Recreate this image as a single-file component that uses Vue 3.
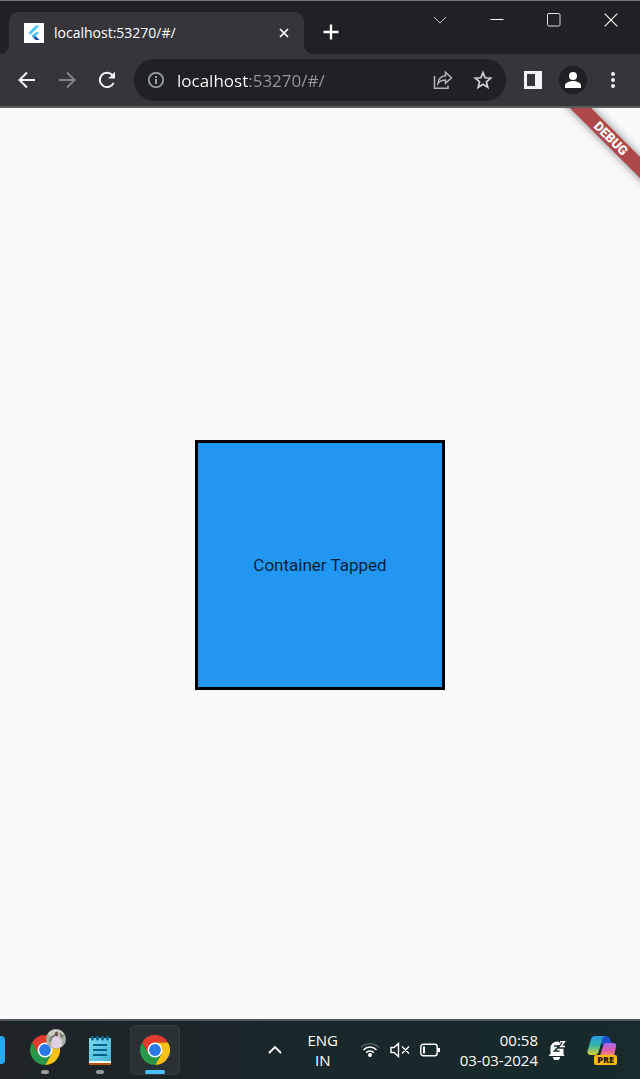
<script setup>
import { ref } from 'vue'

const address = ref('localhost:53270/#/')
const wedges = [
  { d: 'M16 8.5 H29 A15 15 0 0 0 3.01 8.5 L9.5 19.7 Z', fill: '#e33b2e' },
  { d: 'M29 8.5 H16 L22.5 19.7 L16 31 A15 15 0 0 0 29 8.5 Z', fill: '#fbc116' },
  { d: 'M3.01 8.5 L9.5 19.7 H22.5 L16 31 A15 15 0 0 1 3.01 8.5 Z', fill: '#279847' }
]
const apps = [
  { name: 'Chrome with profile', kind: 'chrome', profile: true, active: false },
  { name: 'Notepad', kind: 'notepad', profile: false, active: false },
  { name: 'Chrome', kind: 'chrome', profile: false, active: true }
]
</script>

<template>
  <div class="desktop">
    <header class="titlebar">
      <div class="tab">
        <button class="tab-title">
          <svg width="20" height="20" viewBox="0 0 20 20">
            <path fill="#fff" d="M0 0h20v20H0z" />
            <path fill="#47c5fb" d="M11.8 2.5h3.7L6.3 11.7 4.4 9.9z" />
            <path fill="#47c5fb" d="M11.8 9.2h3.7l-4 4-1.9-1.8z" />
            <path fill="#29a5f0" d="M7.8 13.2l1.9-1.9 2 1.9-2 2z" />
            <path fill="#12409b" d="M9.7 15.2l2-2 3.8 3.8h-3.7z" />
          </svg>
          <span>localhost:53270/#/</span>
        </button>
        <button class="tab-close" aria-label="Close tab">
          <svg width="10" height="10" viewBox="0 0 10 10"><path d="M1 1l8 8M9 1l-8 8" stroke="#fff" stroke-width="1.700" /></svg>
        </button>
      </div>
      <button class="new-tab" aria-label="New tab">
        <svg width="16" height="16" viewBox="0 0 16 16"><path d="M8 .5v15M.5 8h15" stroke="#fff" stroke-width="2.300" /></svg>
      </button>
      <div class="window-buttons">
        <button aria-label="Search tabs">
          <svg width="14" height="14" viewBox="0 0 14 14"><path d="M1 4l6 6 6-6" fill="none" stroke="#c8c8c9" /></svg>
        </button>
        <button aria-label="Minimize">
          <svg width="14" height="14" viewBox="0 0 14 14"><path d="M.5 6.500h13" stroke="#fff" /></svg>
        </button>
        <button aria-label="Maximize">
          <svg width="14" height="14" viewBox="0 0 14 14"><rect x=".5" y=".5" width="12.500" height="12.500" rx="1.500" fill="none" stroke="#e2e2e2" /></svg>
        </button>
        <button aria-label="Close">
          <svg width="14" height="14" viewBox="0 0 14 14"><path d="M.7.7l12.600 12.600M13.300.7L.7 13.300" stroke="#fff" stroke-width="1.100" /></svg>
        </button>
      </div>
    </header>

    <nav class="toolbar">
      <button class="tool" aria-label="Back">
        <svg width="20" height="20" viewBox="0 0 20 20" fill="none" stroke="#f1f3f4" stroke-width="2"><path d="M18 10H3M10 2.500L2.500 10l7.500 7.500" /></svg>
      </button>
      <button class="tool" aria-label="Forward">
        <svg width="20" height="20" viewBox="0 0 20 20" fill="none" stroke="#838488" stroke-width="2"><path d="M2 10h15M10 2.500L17.500 10 10 17.500" /></svg>
      </button>
      <button class="tool" aria-label="Reload">
        <svg width="20" height="20" viewBox="0 0 20 20"><path d="M16.600 12.800A7.200 7.200 0 1 1 15.300 5" fill="none" stroke="#f1f3f4" stroke-width="2" /><path d="M18 1.800v6.800h-6.800z" fill="#f1f3f4" /></svg>
      </button>
      <div class="omnibox">
        <button aria-label="Site information">
          <svg width="18" height="18" viewBox="0 0 18 18"><circle cx="9" cy="9" r="7.200" fill="none" stroke="#9aa0a6" stroke-width="1.800" /><path d="M8 8h2v5H8zM8 5h2v2H8z" fill="#9aa0a6" /></svg>
        </button>
        <input v-model="address" class="address" type="text" aria-label="Address" />
        <button aria-label="Share">
          <svg width="20" height="20" viewBox="0 0 20 20" fill="none" stroke="#b5b6b8" stroke-width="1.500"><path d="M1.500 6v12.200h13.500V15.500" /><path d="M5 13.500C5.500 8.500 8.500 6 12.500 5.700V2.200L18.500 7.800l-6 5.500V9.900C9.500 9.900 7 10.800 5 13.500z" /></svg>
        </button>
        <button aria-label="Bookmark this page">
          <svg width="20" height="20" viewBox="0 0 20 20"><path d="M10 2.600l2.100 5.200 5.600.4-4.300 3.600 1.400 5.500-4.800-3-4.800 3 1.400-5.500-4.300-3.600 5.600-.4z" fill="none" stroke="#d0d1d3" stroke-width="1.700" /></svg>
        </button>
      </div>
      <button class="tool" aria-label="Side panel">
        <svg width="18" height="18" viewBox="0 0 18 18"><path fill="#f1f3f4" fill-rule="evenodd" d="M0 0h18v18H0zM3 3h8v12H3z" /></svg>
      </button>
      <button class="tool" aria-label="Profile">
        <svg width="28" height="28" viewBox="0 0 28 28"><circle cx="14" cy="14" r="14" fill="#202124" /><circle cx="14" cy="10" r="4" fill="#fff" /><path d="M6 22v-2.500c0-2.800 5-4.500 8-4.500s8 1.700 8 4.500V22z" fill="#fff" /></svg>
      </button>
      <button class="tool" aria-label="Menu">
        <svg width="20" height="20" viewBox="0 0 20 20" fill="#f1f3f4"><circle cx="10" cy="4" r="2" /><circle cx="10" cy="10" r="2" /><circle cx="10" cy="16" r="2" /></svg>
      </button>
    </nav>

    <main class="page">
      <div class="banner">DEBUG</div>
      <button class="container-box">Container Tapped</button>
    </main>

    <footer class="taskbar">
      <div class="edge-app"></div>
      <div class="apps">
        <button v-for="app in apps" :key="app.name" class="app" :class="{ active: app.active }" :aria-label="app.name">
          <svg v-if="app.kind === 'chrome'" width="30" height="30" viewBox="1 1 30 30">
            <path v-for="w in wedges" :key="w.d" :d="w.d" :fill="w.fill" />
            <circle cx="16" cy="16" r="7.500" fill="#fff" />
            <circle cx="16" cy="16" r="5.900" fill="#2a78e8" />
          </svg>
          <svg v-else width="24" height="30" viewBox="0 0 24 30">
            <defs>
              <linearGradient id="paper" x1="0" y1="0" x2="1" y2="1"><stop offset="0" stop-color="#7bdcf0" /><stop offset="1" stop-color="#43b4d6" /></linearGradient>
            </defs>
            <path fill="#b5580e" d="M1 24h22v6H1z" />
            <path fill="#fff" d="M1 24h22v4H1z" />
            <path fill="url(#paper)" d="M1 3h22v23H1z" />
            <path d="M4.500 2v2M9.500 2v2M14.500 2v2M19.500 2v2" stroke="#0d6488" stroke-width="3" stroke-linecap="round" />
            <path d="M5 10h14M5 15h14M5 20h14" stroke="#07608a" stroke-width="2" />
          </svg>
          <svg v-if="app.profile" class="badge" width="20" height="20" viewBox="0 0 20 20">
            <circle cx="10" cy="10" r="10" fill="#a7afa0" />
            <path d="M2 4.500A10 10 0 0 1 18 4.500L13 8H5z" fill="#c9ccc5" />
            <path d="M4 8l5-3v5l-6 3zM13 3l5 4-3 2z" fill="#75806e" />
            <path d="M5 17.500l1-8 2.500-2h4l3 3 .5 6.500a10 10 0 0 1-11 .5z" fill="#dfd0e3" />
            <ellipse cx="10.500" cy="4.900" rx="1.700" ry="2.500" fill="#6d5450" />
          </svg>
          <span class="indicator"></span>
        </button>
      </div>

      <div class="tray">
        <button class="hidden-icons" aria-label="Show hidden icons">
          <svg width="14" height="10" viewBox="0 0 14 10"><path d="M1 8l6-6 6 6" fill="none" stroke="#fff" stroke-width="1.900" /></svg>
        </button>
        <button class="language">ENG<br />IN</button>
        <button class="status" aria-label="Network, volume and battery">
          <svg width="20" height="16" viewBox="0 0 20 16" fill="none" stroke-width="1.500"><path d="M1 5.500a12.500 12.500 0 0 1 18 0" stroke="#4d5b5e" /><path d="M3.500 7.900a9 9 0 0 1 13 0M6.200 10.600a5.400 5.400 0 0 1 7.600 0" stroke="#fff" /><circle cx="10" cy="13" r="2" fill="#fff" /></svg>
          <svg width="20" height="16" viewBox="0 0 20 16" fill="none" stroke="#fff" stroke-width="1.400"><path d="M1 5.500h3L8.500 1.500v13L4 10.500H1zM12 4.500l7 7M19 4.500l-7 7" /></svg>
          <svg width="20" height="14" viewBox="0 0 20 14"><rect x=".8" y="1.200" width="16.400" height="11.600" rx="2.500" fill="none" stroke="#fff" stroke-width="1.400" /><path d="M3 3.500h2v7H3zM17.500 5H20v4h-2.500z" fill="#fff" /></svg>
        </button>
        <button class="clock">00:58<br />03-03-2024</button>
        <button class="bell" aria-label="Notifications">
          <svg width="18" height="20" viewBox="0 0 18 20">
            <path d="M2.500 14V8a6.500 6.500 0 0 1 13 0v6l1 2H.500z" fill="#fff" />
            <path d="M5 17h7a3.500 3.500 0 0 1-7 0z" fill="#fff" />
            <path d="M11.500 1.500h5L12.500 7h4.500" fill="none" stroke="#18282c" stroke-width="3.500" />
            <path d="M6 6h5L6.500 11h5" fill="none" stroke="#18282c" stroke-width="1.500" />
            <path d="M12 1.800h4.500L12.800 6.500H17" fill="none" stroke="#fff" stroke-width="1.400" />
          </svg>
        </button>
        <button class="copilot" aria-label="Copilot preview">
          <svg width="30" height="28" viewBox="0 0 30 28">
            <defs>
              <linearGradient id="cool" x1="0" y1="0" x2="0" y2="1"><stop offset="0" stop-color="#269be8" /><stop offset=".5" stop-color="#36b5a4" /><stop offset="1" stop-color="#e1d334" /></linearGradient>
              <linearGradient id="warm" x1="0" y1="0" x2="0" y2="1"><stop offset="0" stop-color="#a866ef" /><stop offset=".6" stop-color="#df5ba4" /><stop offset="1" stop-color="#ff9a62" /></linearGradient>
            </defs>
            <path d="M11 0h8q3 0 4 3l1.500 4H19l-4 2z" fill="#1d50ce" />
            <path d="M8 0h11q-3 0-4 4l-3.500 12q-1 3-4 3H4q-4 0-3.500-4L4 3q1-3 4-3z" fill="url(#cool)" />
            <path d="M19.500 7H26q4 0 3 4l-2 9H13l3-10q1-3 3.500-3z" fill="url(#warm)" />
          </svg>
          <span class="pre">PRE</span>
        </button>
      </div>
    </footer>
  </div>
</template>

<style>
body {
  margin: 0;
}
</style>

<style scoped>
.desktop {
  display: flex;
  flex-direction: column;
  min-height: 100vh;
  font-family: "Open Sans", "Noto Sans", sans-serif;
  color: #fff;
}
button {
  display: flex;
  align-items: center;
  justify-content: center;
  padding: 0;
  border: 0;
  background: none;
  color: inherit;
  font: inherit;
}
svg {
  display: block;
  flex: none;
}
.titlebar {
  display: flex;
  box-sizing: border-box;
  height: 54px;
  border-top: 1px solid #747775;
  padding-left: 9px;
  background: #202124;
}
.tab {
  position: relative;
  display: flex;
  align-items: center;
  justify-content: space-between;
  box-sizing: border-box;
  flex: 0 1 295px;
  margin-top: 11px;
  padding: 0 10px 0 15px;
  border-radius: 9px 9px 0 0;
  background: #35363a;
}
.tab::before,
.tab::after {
  content: "";
  position: absolute;
  bottom: 0;
  width: 9px;
  height: 9px;
}
.tab::before {
  right: 100%;
  background: radial-gradient(circle at 0 0, transparent 9px, #35363a 9px);
}
.tab::after {
  left: 100%;
  background: radial-gradient(circle at 100% 0, transparent 9px, #35363a 9px);
}
.tab-title {
  gap: 10px;
  font-size: 14px;
  line-height: 20px;
}
.tab-close {
  width: 20px;
  height: 20px;
}
.new-tab {
  width: 32px;
  height: 32px;
  margin: 15px 0 0 11px;
}
.window-buttons {
  display: flex;
  margin-left: auto;
  padding-right: 1px;
}
.window-buttons button {
  width: 57px;
  height: 38px;
}
.toolbar {
  display: flex;
  align-items: center;
  height: 52px;
  padding: 0 7px;
  border-bottom: 2px solid #5b5b5f;
  background: #35363a;
}
.tool {
  flex: none;
  width: 40px;
  height: 40px;
}
.omnibox {
  display: flex;
  align-items: center;
  flex: 1;
  min-width: 0;
  height: 42px;
  box-sizing: border-box;
  margin: 0 7px;
  padding: 0 13px;
  gap: 20px;
  border-radius: 21px;
  background: #202124;
}
.address {
  flex: 1;
  min-width: 0;
  height: 28px;
  margin-left: -8px;
  padding: 0;
  border: 0;
  outline: 0;
  background: linear-gradient(90deg, #fff 71px, #96999d 71px);
  background-clip: text;
  color: transparent;
  font: inherit;
  font-size: 17px;
}
.page {
  position: relative;
  display: flex;
  align-items: center;
  justify-content: center;
  flex: 1;
  overflow: hidden;
  padding-top: 3px;
  background: #fafafa;
  font-family: Roboto, sans-serif;
}
.banner {
  position: absolute;
  top: 23px;
  right: -41px;
  width: 140px;
  transform: rotate(45deg);
  background: #ae4949;
  box-shadow: 0 0 8px rgba(0, 0, 0, 0.5);
  font-size: 13px;
  font-weight: 900;
  line-height: 15px;
  text-align: center;
}
.container-box {
  box-sizing: border-box;
  width: 250px;
  height: 250px;
  border: 3px solid #000;
  background: #2196f3;
  color: rgba(0, 0, 0, 0.8);
  font-size: 17px;
}
.taskbar {
  display: flex;
  align-items: center;
  justify-content: space-between;
  box-sizing: border-box;
  height: 60px;
  border-top: 2px solid #505957;
  padding-right: 23px;
  background: linear-gradient(90deg, #1e2428, #18282b 60%, #182a2b);
}
.edge-app {
  width: 5px;
  height: 28px;
  border-radius: 0 4px 4px 0;
  background: #28a8f5;
}
.apps {
  display: flex;
  gap: 5px;
  margin: 0 auto 0 15px;
}
.app {
  position: relative;
  box-sizing: border-box;
  width: 50px;
  height: 50px;
  border-radius: 5px;
}
.app.active {
  border: 1px solid #343d40;
  background: #293135;
}
.badge {
  position: absolute;
  top: 4px;
  right: 4px;
}
.indicator {
  position: absolute;
  bottom: 1px;
  width: 8px;
  height: 4px;
  border-radius: 2px;
  background: #969a9d;
}
.active .indicator {
  bottom: 0;
  width: 20px;
  background: #4cc2ff;
}
.tray {
  display: flex;
  align-items: center;
  font-size: 15px;
  line-height: 20px;
}
.hidden-icons {
  width: 30px;
  height: 40px;
}
.language {
  width: 40px;
  margin: 0 17px 0 13px;
}
.status {
  gap: 10px;
  margin-right: 20px;
}
.clock {
  text-align: right;
}
.bell {
  margin: 0 21px 0 10px;
}
.copilot {
  position: relative;
}
.pre {
  position: absolute;
  right: 0;
  bottom: -1px;
  padding: 0 3px;
  border-radius: 2px;
  background: #fdba10;
  color: #241b0b;
  font-size: 9px;
  font-weight: 800;
  line-height: 10px;
}
</style>
